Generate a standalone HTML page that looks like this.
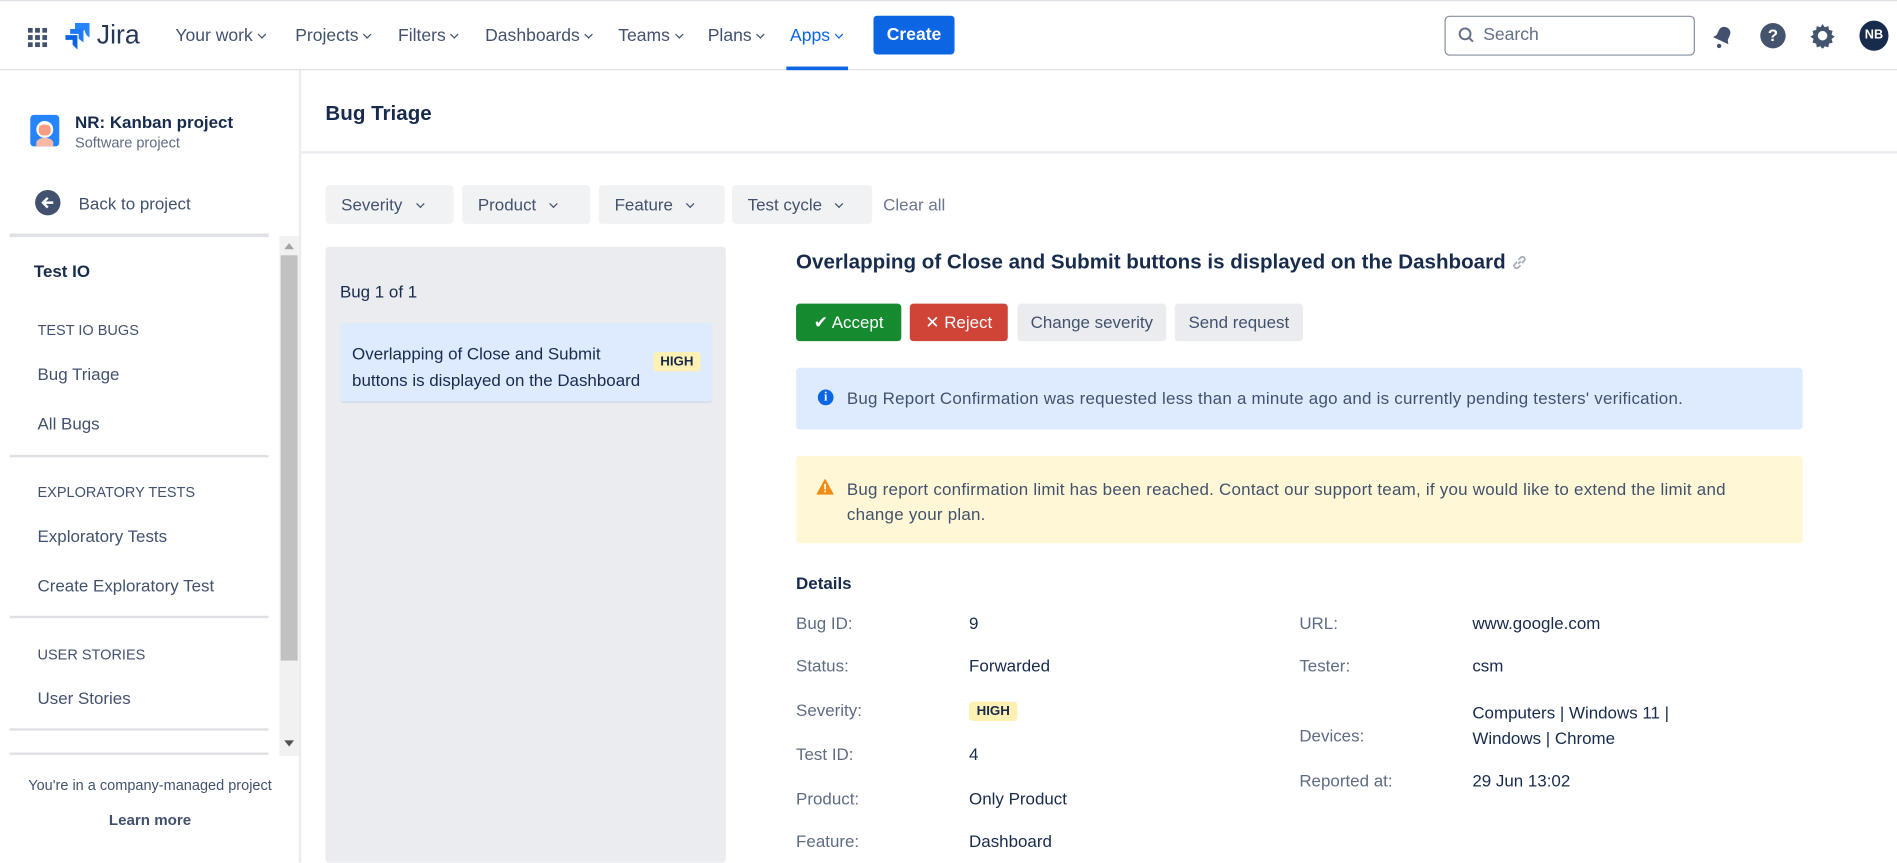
<!DOCTYPE html>
<html><head><meta charset="utf-8"><style>
*{box-sizing:border-box;margin:0;padding:0}
html,body{width:1897px;height:862px;overflow:hidden;background:#fff}
#w{position:absolute;left:0;top:0;width:1568px;height:713px;transform:scale(1.2098);transform-origin:0 0;font-family:"Liberation Sans",sans-serif;color:#172b4d;font-size:14px}
.a{position:absolute;white-space:nowrap}
.nav{top:22px;font-size:14.5px;color:#42526e}
.chev{display:inline-block;width:5px;height:5px;border-right:1.6px solid currentColor;border-bottom:1.6px solid currentColor;transform:rotate(45deg);margin-left:5px;position:relative;top:-3px}
.fb{position:absolute;top:153px;height:32px;background:#f1f2f4;border-radius:3px;padding:0 0 0 13px;line-height:32px;font-size:14px;color:#42526e}
.fb .chev{margin-left:12px}
.sec{font-size:12px;color:#42526e}
.it{font-size:14px;color:#42526e}
.hr{position:absolute;left:8px;width:214px;height:2px;background:#dfe1e6}
.btn{position:absolute;top:251px;height:31px;border-radius:3px;line-height:31px;text-align:center;font-size:14px}
.lb{color:#5e6c84;font-size:14px}
.vl{color:#172b4d;font-size:14px}
</style></head><body><div id="w">
<div class="a" style="left:0;top:0;width:1568px;height:1px;background:#dfe1e6"></div>
<div class="a" style="left:0;top:57px;width:1568px;height:1px;background:#dfe1e6"></div>
<svg class="a" style="left:23px;top:23px" width="16" height="16" viewBox="0 0 16 16" fill="#42526e"><rect x="0" y="0" width="4" height="4"/><rect x="6" y="0" width="4" height="4"/><rect x="12" y="0" width="4" height="4"/><rect x="0" y="6" width="4" height="4"/><rect x="6" y="6" width="4" height="4"/><rect x="12" y="6" width="4" height="4"/><rect x="0" y="12" width="4" height="4"/><rect x="6" y="12" width="4" height="4"/><rect x="12" y="12" width="4" height="4"/></svg>
<svg class="a" style="left:54px;top:19px" width="20" height="22" viewBox="0 0 20 22"><path d="M8 0h12v12a8 8 0 0 1-4-6H8z" fill="#2684ff"/><path d="M4 5h11v11l-4-3V9H4z" fill="#1d7afc"/><path d="M0 10h10v12l-4-4v-4H0z" fill="#0c66e4"/></svg>
<div class="a" style="left:80px;top:16px;font-size:22px;color:#253858">Jira</div>
<div class="a nav" style="left:145px">Your work<span class="chev"></span></div>
<div class="a nav" style="left:244px">Projects<span class="chev"></span></div>
<div class="a nav" style="left:329px">Filters<span class="chev"></span></div>
<div class="a nav" style="left:401px">Dashboards<span class="chev"></span></div>
<div class="a nav" style="left:511px">Teams<span class="chev"></span></div>
<div class="a nav" style="left:585px">Plans<span class="chev"></span></div>
<div class="a nav" style="left:653px;color:#0c66e4">Apps<span class="chev"></span></div>
<div class="a" style="left:650px;top:55px;width:51px;height:3px;background:#0c66e4"></div>
<div class="a" style="left:722px;top:13px;width:67px;height:32px;background:#0c66e4;border-radius:3px;color:#fff;font-size:14.5px;font-weight:bold;line-height:32px;text-align:center">Create</div>
<div class="a" style="left:1194px;top:13px;width:207px;height:33px;border:1px solid #8590a2;border-radius:4px"></div>
<svg class="a" style="left:1205px;top:22px" width="14" height="14" viewBox="0 0 14 14" fill="none" stroke="#626f86" stroke-width="1.6"><circle cx="6" cy="6" r="4.5"/><path d="M9.5 9.5l3 3"/></svg>
<div class="a" style="left:1226px;top:21px;font-size:14.5px;color:#626f86">Search</div>
<svg class="a" style="left:1414px;top:19px" width="20" height="22" viewBox="0 0 20 22"><path d="M10 3c3 0 5 2 5 5v4l2 3H3l2-3V8c0-3 2-5 5-5z" fill="#42526e" transform="rotate(25 10 11)"/><circle cx="7" cy="19" r="1.8" fill="#42526e"/></svg>
<div class="a" style="left:1455px;top:19px;width:21px;height:21px;border-radius:50%;background:#44546f;color:#fff;font-weight:bold;font-size:14px;text-align:center;line-height:21px">?</div>
<svg class="a" style="left:1496px;top:19px" width="21" height="21" viewBox="0 0 24 24"><path d="M12 1l2 3 3.5-1 .5 3.5 3.5 1-1 3.5 3 2-3 2 1 3.5-3.5 1-.5 3.5-3.5-1-2 3-2-3-3.5 1-.5-3.5-3.5-1 1-3.5-3-2 3-2-1-3.5 3.5-1 .5-3.5 3.5 1z" fill="#44546f"/><circle cx="12" cy="12" r="4.5" fill="#fff"/></svg>
<div class="a" style="left:1537px;top:17px;width:24px;height:25px;border-radius:50%;background:#172b4d;color:#fff;font-size:10.5px;text-align:center;line-height:25px;font-weight:bold">NB</div>

<div class="a" style="left:247px;top:58px;width:2px;height:655px;background:#ebecf0"></div>
<div class="a" style="left:25px;top:95px;width:24px;height:26px;border-radius:3px;background:#2684ff;overflow:hidden"><div style="position:absolute;left:5px;top:5px;width:14px;height:14px;border-radius:50%;background:#fff"></div><div style="position:absolute;left:7px;top:8px;width:10px;height:9px;border-radius:40%;background:#f79d84"></div><div style="position:absolute;left:5px;top:19px;width:14px;height:8px;border-radius:50% 50% 0 0;background:#f9b9a5"></div></div>
<div class="a" style="left:62px;top:93px;font-size:14px;font-weight:bold;color:#172b4d">NR: Kanban project</div>
<div class="a" style="left:62px;top:111px;font-size:12px;color:#5e6c84">Software project</div>
<div class="a" style="left:29px;top:157px;width:21px;height:21px;border-radius:50%;background:#42526e"></div>
<svg class="a" style="left:33px;top:161px" width="13" height="13" viewBox="0 0 13 13" fill="none" stroke="#fff" stroke-width="2"><path d="M11 6.5H3M6.5 2.5l-4 4 4 4"/></svg>
<div class="a it" style="left:65px;top:160px">Back to project</div>
<div class="a" style="left:8px;top:193px;width:214px;height:3px;background:#dfe1e6"></div>
<div class="a" style="left:231px;top:195px;width:16px;height:430px;background:#f1f1f1"></div>
<div class="a" style="left:232px;top:211px;width:14px;height:335px;background:#c1c1c1"></div>
<div class="a" style="left:235px;top:201px;width:0;height:0;border-left:4px solid transparent;border-right:4px solid transparent;border-bottom:5px solid #a3a3a3"></div>
<div class="a" style="left:235px;top:612px;width:0;height:0;border-left:4px solid transparent;border-right:4px solid transparent;border-top:5px solid #505050"></div>
<div class="a" style="left:28px;top:216px;font-size:14px;font-weight:bold;color:#172b4d">Test IO</div>
<div class="a sec" style="left:31px;top:266px">TEST IO BUGS</div>
<div class="a it" style="left:31px;top:301px">Bug Triage</div>
<div class="a it" style="left:31px;top:342px">All Bugs</div>
<div class="hr" style="top:376px"></div>
<div class="a sec" style="left:31px;top:400px">EXPLORATORY TESTS</div>
<div class="a it" style="left:31px;top:435px">Exploratory Tests</div>
<div class="a it" style="left:31px;top:476px">Create Exploratory Test</div>
<div class="hr" style="top:509px"></div>
<div class="a sec" style="left:31px;top:534px">USER STORIES</div>
<div class="a it" style="left:31px;top:569px">User Stories</div>
<div class="hr" style="top:602px"></div>
<div class="hr" style="top:622px"></div>
<div class="a" style="left:0;top:642px;width:248px;text-align:center;font-size:12px;color:#42526e">You're in a company-managed project</div>
<div class="a" style="left:0;top:671px;width:248px;text-align:center;font-size:12.5px;font-weight:bold;color:#42526e">Learn more</div>

<div class="a" style="left:269px;top:84px;font-size:17px;font-weight:bold">Bug Triage</div>
<div class="a" style="left:249px;top:125px;width:1319px;height:2px;background:#ebecf0"></div>
<div class="fb" style="left:269px;width:106px">Severity<span class="chev"></span></div>
<div class="fb" style="left:382px;width:106px">Product<span class="chev"></span></div>
<div class="fb" style="left:495px;width:104px">Feature<span class="chev"></span></div>
<div class="fb" style="left:605px;width:116px">Test cycle<span class="chev"></span></div>
<div class="a" style="left:730px;top:161px;font-size:14px;color:#6b778c">Clear all</div>

<div class="a" style="left:269px;top:204px;width:331px;height:509px;background:#ebecf0;border-radius:3px"></div>
<div class="a" style="left:281px;top:233px;font-size:14px">Bug 1 of 1</div>
<div class="a" style="left:281px;top:267px;width:308px;height:66px;background:#deebff;border-radius:3px;border-bottom:1px solid #d0d6e0"></div>
<div class="a" style="left:291px;top:281px;font-size:14px;line-height:22px">Overlapping of Close and Submit<br>buttons is displayed on the Dashboard</div>
<div class="a" style="left:540px;top:291px;width:39px;height:16px;background:#fff0b3;border-radius:3px;font-size:11px;font-weight:bold;text-align:center;line-height:16px">HIGH</div>

<div class="a" style="left:658px;top:207px;font-size:17px;font-weight:bold">Overlapping of Close and Submit buttons is displayed on the Dashboard</div>
<svg class="a" style="left:1249px;top:210px" width="14" height="14" viewBox="0 0 14 14" fill="none" stroke="#a5adba" stroke-width="1.5"><path d="M6 8l2-2M5 6.5l-2 2a2 2 0 0 0 2.8 2.8l2-2M9 7.5l2-2A2 2 0 0 0 8.2 2.7l-2 2"/></svg>
<div class="btn" style="left:658px;width:87px;background:#168a2e;color:#fff">✔ Accept</div>
<div class="btn" style="left:752px;width:81px;background:#d04437;color:#fff">✕ Reject</div>
<div class="btn" style="left:841px;width:123px;background:#ebecf0;color:#42526e">Change severity</div>
<div class="btn" style="left:971px;width:106px;background:#ebecf0;color:#42526e">Send request</div>

<div class="a" style="left:658px;top:304px;width:832px;height:51px;background:#deebff;border-radius:3px"></div>
<div class="a" style="left:676px;top:322px;width:13px;height:13px;border-radius:50%;background:#0c66e4;color:#fff;font-size:10px;font-weight:bold;text-align:center;line-height:13px;font-family:'Liberation Serif',serif">i</div>
<div class="a" style="left:700px;top:321px;font-size:14px;color:#42526e;letter-spacing:0.2px">Bug Report Confirmation was requested less than a minute ago and is currently pending testers' verification.</div>
<div class="a" style="left:658px;top:377px;width:832px;height:72px;background:#fff7d6;border-radius:3px"></div>
<svg class="a" style="left:675px;top:396px" width="14" height="13" viewBox="0 0 14 13"><path d="M7 0.5L13.5 12.5H0.5z" fill="#f18d13" stroke="#f18d13" stroke-linejoin="round"/><rect x="6.3" y="4" width="1.4" height="4.5" fill="#fff"/><rect x="6.3" y="9.5" width="1.4" height="1.4" fill="#fff"/></svg>
<div class="a" style="left:700px;top:394px;font-size:14px;color:#42526e;line-height:21px;letter-spacing:0.2px">Bug report confirmation limit has been reached. Contact our support team, if you would like to extend the limit and<br>change your plan.</div>

<div class="a" style="left:658px;top:474px;font-size:14px;font-weight:bold">Details</div>
<div class="a lb" style="left:658px;top:507px">Bug ID:</div><div class="a vl" style="left:801px;top:507px">9</div>
<div class="a lb" style="left:658px;top:542px">Status:</div><div class="a vl" style="left:801px;top:542px">Forwarded</div>
<div class="a lb" style="left:658px;top:579px">Severity:</div><div class="a" style="left:801px;top:580px;width:40px;height:16px;background:#fff0b3;border-radius:3px;font-size:11px;font-weight:bold;text-align:center;line-height:16px">HIGH</div>
<div class="a lb" style="left:658px;top:615px">Test ID:</div><div class="a vl" style="left:801px;top:615px">4</div>
<div class="a lb" style="left:658px;top:652px">Product:</div><div class="a vl" style="left:801px;top:652px">Only Product</div>
<div class="a lb" style="left:658px;top:687px">Feature:</div><div class="a vl" style="left:801px;top:687px">Dashboard</div>
<div class="a lb" style="left:1074px;top:507px">URL:</div><div class="a vl" style="left:1217px;top:507px">www.google.com</div>
<div class="a lb" style="left:1074px;top:542px">Tester:</div><div class="a vl" style="left:1217px;top:542px">csm</div>
<div class="a lb" style="left:1074px;top:600px">Devices:</div><div class="a vl" style="left:1217px;top:579px;line-height:21px">Computers | Windows 11 |<br>Windows | Chrome</div>
<div class="a lb" style="left:1074px;top:637px">Reported at:</div><div class="a vl" style="left:1217px;top:637px">29 Jun 13:02</div>
</div></body></html>
